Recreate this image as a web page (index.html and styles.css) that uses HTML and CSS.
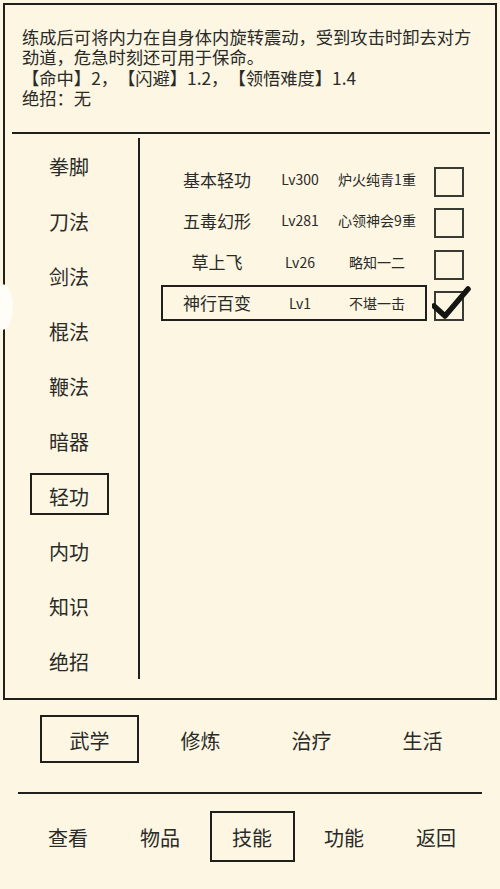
FILE: index.html
```html
<!DOCTYPE html>
<html lang="zh-CN">
<head>
    <meta charset="UTF-8">
    <meta name="viewport" content="width=device-width, initial-scale=1.0">
    <title>技能</title>
    <link rel="stylesheet" href="styles.css">
</head>
<body>
    <div class="frame">
        <div class="desc">
            <p>练成后可将内力在自身体内旋转震动，受到攻击时卸去对方劲道，危急时刻还可用于保命。</p>
            <p>【命中】2，【闪避】1.2，【领悟难度】1.4</p>
            <p>绝招：无</p>
        </div>
        <div class="rule rule-top"></div>

        <div class="main">
            <ul class="sidebar">
                <li><span>拳脚</span></li>
                <li><span>刀法</span></li>
                <li><span>剑法</span></li>
                <li><span>棍法</span></li>
                <li><span>鞭法</span></li>
                <li><span>暗器</span></li>
                <li><span class="active">轻功</span></li>
                <li><span>内功</span></li>
                <li><span>知识</span></li>
                <li><span>绝招</span></li>
            </ul>

            <div class="skills">
                <div class="skill-row">
                    <div class="skill">
                        <span class="name">基本轻功</span>
                        <span class="lv">Lv300</span>
                        <span class="grade">炉火纯青1重</span>
                    </div>
                    <div class="check"></div>
                </div>
                <div class="skill-row">
                    <div class="skill">
                        <span class="name">五毒幻形</span>
                        <span class="lv">Lv281</span>
                        <span class="grade">心领神会9重</span>
                    </div>
                    <div class="check"></div>
                </div>
                <div class="skill-row">
                    <div class="skill">
                        <span class="name">草上飞</span>
                        <span class="lv">Lv26</span>
                        <span class="grade">略知一二</span>
                    </div>
                    <div class="check"></div>
                </div>
                <div class="skill-row">
                    <div class="skill selected">
                        <span class="name">神行百变</span>
                        <span class="lv">Lv1</span>
                        <span class="grade">不堪一击</span>
                    </div>
                    <div class="check checked">
                        <svg class="tick" width="40" height="34" viewBox="-3 -5 40 34">
                            <path d="M-1 15 L10 25 L33 -2" fill="none" stroke="#151512" stroke-width="5.5" stroke-linecap="round" stroke-linejoin="round"/>
                        </svg>
                    </div>
                </div>
            </div>
        </div>
    </div>

    <div class="handle"></div>

    <div class="tabs tabs-sub">
        <div class="tab"><span class="active">武学</span></div>
        <div class="tab"><span>修炼</span></div>
        <div class="tab"><span>治疗</span></div>
        <div class="tab"><span>生活</span></div>
    </div>
    <div class="rule rule-bottom"></div>
    <div class="tabs tabs-main">
        <div class="tab"><span>查看</span></div>
        <div class="tab"><span>物品</span></div>
        <div class="tab"><span class="active">技能</span></div>
        <div class="tab"><span>功能</span></div>
        <div class="tab"><span>返回</span></div>
    </div>
</body>
</html>
```

FILE: styles.css
```css
* {
    box-sizing: border-box;
}
body {
    margin: 0;
    width: 500px;
    height: 889px;
    overflow: hidden;
    position: relative;
    background-color: #fcf6e3;
    color: #2a2a27;
    font-family: "Noto Sans CJK SC", "Noto Sans", sans-serif;
    text-spacing-trim: space-all;
}
.frame {
    margin: 3px 3px 0 3px;
    width: 494px;
    height: 697px;
    border: 2px solid #1f1f1b;
    display: flex;
    flex-direction: column;
}
.desc {
    height: 127px;
    padding: 22px 12px 0 17px;
    font-size: 17.3px;
    line-height: 20.3px;
}
.desc p {
    margin: 0;
}
.rule {
    height: 2px;
    background-color: #1f1f1b;
}
.rule-top {
    margin: 0 5px 0 7px;
}
.main {
    flex: 1;
    display: flex;
}
.sidebar {
    list-style: none;
    margin: 4px 0 0 0;
    padding: 0 5px 0 0;
    width: 135px;
    height: 541px;
    border-right: 2px solid #1f1f1b;
}
.sidebar li {
    height: 55px;
    display: flex;
    align-items: center;
    justify-content: center;
    font-size: 20px;
}
.sidebar span {
    width: 79px;
    height: 42px;
    display: flex;
    align-items: center;
    justify-content: center;
    border: 2px solid transparent;
    margin-top: -3px;
    padding-top: 5px;
}
.sidebar .active {
    border-color: #1f1f1b;
}
.skills {
    flex: 1;
    padding: 27px 0 0 21px;
    display: flex;
    flex-direction: column;
    gap: 5.3px;
}
.skill-row {
    display: flex;
    align-items: flex-start;
}
.skill {
    width: 266px;
    height: 36px;
    display: flex;
    align-items: center;
    border: 2px solid transparent;
}
.skill.selected {
    border-color: #1f1f1b;
}
.skill .name {
    width: 108px;
    text-align: center;
    font-size: 17px;
}
.skill .lv {
    width: 58px;
    text-align: center;
    font-size: 14px;
}
.skill .grade {
    width: 96px;
    text-align: center;
    font-size: 14px;
}
.check {
    position: relative;
    width: 30px;
    height: 30px;
    margin: 6px 0 0 7px;
    border: 2px solid #3a3a34;
}
.check .tick {
    position: absolute;
    left: -4px;
    top: -7px;
}
.handle {
    position: absolute;
    left: -9px;
    top: 284px;
    width: 22px;
    height: 46px;
    border-radius: 50%;
    background-color: #fffdf7;
}
.tabs {
    display: flex;
}
.tab {
    display: flex;
    align-items: center;
    justify-content: center;
    font-size: 20px;
}
.tab span {
    display: flex;
    align-items: center;
    justify-content: center;
    border: 2px solid transparent;
}
.tab .active {
    border-color: #1f1f1b;
}
.tabs-sub {
    margin-top: 15px;
    padding-left: 34px;
}
.tabs-sub .tab {
    width: 111px;
}
.tabs-sub .tab span {
    width: 99px;
    height: 48px;
    padding-top: 3px;
}
.rule-bottom {
    margin: 29px 18px 0 18px;
}
.tabs-main {
    margin-top: 17px;
    padding-left: 22px;
}
.tabs-main .tab {
    width: 92px;
}
.tabs-main .tab span {
    width: 85px;
    height: 51px;
    padding-top: 2px;
}
```
